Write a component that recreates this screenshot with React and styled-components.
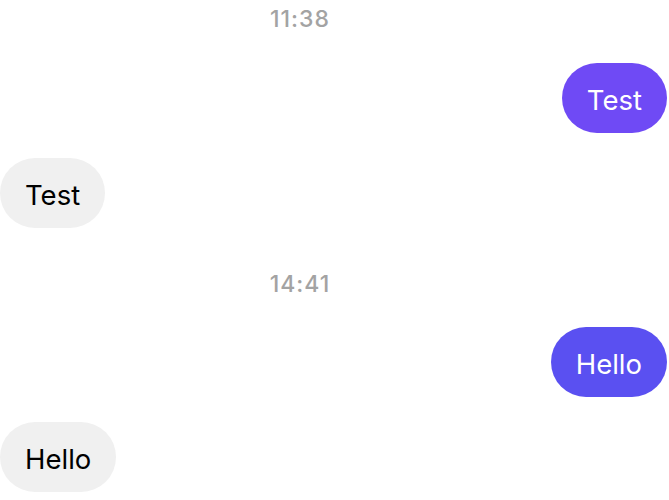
import React from 'react';
import styled, { createGlobalStyle } from 'styled-components';

const Global = createGlobalStyle`
  body {
    margin: 0;
    background: #fff;
    font-family: Inter, 'Noto Sans', sans-serif;
  }
`;

const Thread = styled.div`
  display: flex;
  flex-direction: column;
  padding: 6px 2px 0 0;
`;

const Stamp = styled.div`
  text-align: center;
  padding-right: 67px;
  font-size: 23px;
  line-height: 26px;
  font-weight: 500;
  letter-spacing: 1px;
  color: #a3a3a3;
  margin: ${(p) => (p.$first ? '0 0 31px' : '43px 0 30px')};
`;

const Row = styled.div`
  display: flex;
  justify-content: ${(p) => (p.$mine ? 'flex-end' : 'flex-start')};
  & + & {
    margin-top: 25px;
  }
`;

const Bubble = styled.div`
  font-size: 27.5px;
  line-height: 30px;
  padding: 22px 25px 18px;
  border-radius: 35px;
  color: ${(p) => (p.$mine ? '#fff' : '#000')};
  background: ${(p) => (p.$mine ? p.$tint : '#f0f0f0')};
`;

const groups = [
  {
    time: '11:38',
    msgs: [
      { mine: true, text: 'Test', tint: '#6f4af5' },
      { mine: false, text: 'Test' },
    ],
  },
  {
    time: '14:41',
    msgs: [
      { mine: true, text: 'Hello', tint: '#5a50f1' },
      { mine: false, text: 'Hello' },
    ],
  },
];

export default function App() {
  return (
    <>
      <Global />
      <Thread>
        {groups.map((g, i) => (
          <React.Fragment key={g.time}>
            <Stamp $first={i === 0}>{g.time}</Stamp>
            <div>
              {g.msgs.map((m, j) => (
                <Row key={j} $mine={m.mine}>
                  <Bubble $mine={m.mine} $tint={m.tint}>
                    {m.text}
                  </Bubble>
                </Row>
              ))}
            </div>
          </React.Fragment>
        ))}
      </Thread>
    </>
  );
}
